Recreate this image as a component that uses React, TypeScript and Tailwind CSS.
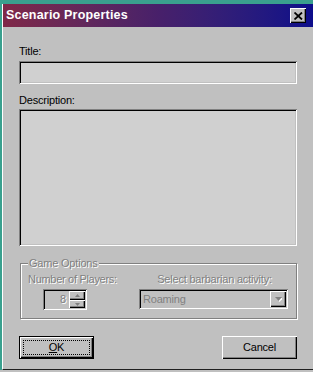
import React from "react";

const sunken =
  "shadow-[inset_1px_1px_0_#808080,inset_-1px_-1px_0_#ffffff,inset_2px_2px_0_#000000,inset_-2px_-2px_0_#c0c0c0]";
const raised =
  "shadow-[inset_1px_1px_0_#ffffff,inset_-1px_-1px_0_#000000,inset_-2px_-2px_0_#808080]";
const disabledText = "text-[#808080] [text-shadow:1px_1px_0_#ffffff]";

export default function App() {
  return (
    <div
      className="w-[313px] h-[372px] bg-[#3aa08e] pt-[4px] pl-[2px] flex flex-col overflow-hidden"
      style={{ fontFamily: '"Liberation Sans", Arial, sans-serif' }}
    >
      <div className="flex-1 flex flex-col bg-[#c0c0c0] border-l border-white border-b border-b-[#202020]">
        {/* Title bar */}
        <div className="h-[23px] flex items-center justify-between pl-[3px] pr-[7px] bg-gradient-to-r from-[#802848] via-[#48206a] to-[#0c0c8a]">
          <span className="text-white font-bold text-[12.5px] tracking-[0.2px] leading-none">
            Scenario Properties
          </span>
          <div
            className={`w-[16px] h-[15px] bg-[#c0c0c0] flex items-center justify-center ${raised}`}
          >
            <svg width="9" height="8" viewBox="0 0 9 8">
              <path d="M0.5 0.5 L8 7.5 M8 0.5 L0.5 7.5" stroke="#000" strokeWidth="1.8" />
            </svg>
          </div>
        </div>

        {/* Body */}
        <div className="flex flex-col pl-[16px] pr-[16px] text-[11px] text-black tracking-[-0.2px]">
          <div className="mt-[18px] leading-[13px]">Title:</div>
          <div className={`mt-[3px] h-[23px] bg-[#d0d0d0] ${sunken}`} />

          <div className="mt-[10px] leading-[13px]">Description:</div>
          <div className={`mt-[2px] h-[137px] bg-[#d0d0d0] ${sunken}`} />

          {/* Group box */}
          <div className="relative mt-[17px] ml-[1px] h-[56px] border border-[#808080] shadow-[inset_1px_1px_0_#ffffff,1px_1px_0_#ffffff] pl-[7px] flex">
            <span
              className={`absolute left-[7px] top-[-7px] px-[1px] bg-[#c0c0c0] leading-[13px] ${disabledText}`}
            >
              Game Options
            </span>
            <div className="w-[111px] flex flex-col pt-[9px]">
              <div className={`leading-[13px] tracking-[-0.3px] ${disabledText}`}>
                Number of Players:
              </div>
              <div
                className={`mt-[3px] ml-[15px] w-[44px] h-[21px] bg-[#c0c0c0] flex items-center p-[2px] ${sunken}`}
              >
                <span className={`flex-1 text-right pr-[3px] leading-none ${disabledText}`}>8</span>
                <div className="flex flex-col w-[16px] h-full">
                  <div className={`h-[9px] flex items-center justify-center ${raised}`}>
                    <svg width="5" height="3" viewBox="0 0 5 3">
                      <path d="M2.5 0 L5 3 L0 3 Z" fill="#808080" />
                    </svg>
                  </div>
                  <div className={`h-[8px] flex items-center justify-center ${raised}`}>
                    <svg width="5" height="3" viewBox="0 0 5 3">
                      <path d="M0 0 L5 0 L2.5 3 Z" fill="#808080" />
                    </svg>
                  </div>
                </div>
              </div>
            </div>
            <div className="w-[149px] flex flex-col pt-[9px]">
              <div className={`leading-[13px] text-center pl-[2px] ${disabledText}`}>
                Select barbarian activity:
              </div>
              <div
                className={`mt-[3px] h-[20px] bg-[#c0c0c0] flex items-center p-[2px] ${sunken}`}
              >
                <span className="flex-1 pl-[2px] text-[#808080] leading-none">Roaming</span>
                <div className={`w-[16px] h-[16px] flex items-center justify-center ${raised}`}>
                  <svg width="7" height="5" viewBox="0 0 7 5">
                    <path d="M1 1 L8 1 L4.5 5 Z" fill="#ffffff" />
                    <path d="M0 0 L7 0 L3.5 4 Z" fill="#808080" />
                  </svg>
                </div>
              </div>
            </div>
          </div>

          {/* Buttons */}
          <div className="mt-[17px] flex justify-between">
            <div
              className={`w-[75px] h-[23px] border border-black bg-[#c0c0c0] p-[3px] shadow-[inset_1px_1px_0_#ffffff,inset_-1px_-1px_0_#000000,inset_-2px_-2px_0_#808080]`}
            >
              <div className="w-full h-full border border-dotted border-black flex items-center justify-center leading-none">
                <span>
                  <span className="underline underline-offset-[1px]">O</span>K
                </span>
              </div>
            </div>
            <div
              className={`w-[75px] h-[23px] bg-[#c0c0c0] flex items-center justify-center leading-none ${raised}`}
            >
              Cancel
            </div>
          </div>
        </div>
      </div>
      <div className="h-[2px] -ml-[2px] bg-[#c0c0c0]" />
    </div>
  );
}
